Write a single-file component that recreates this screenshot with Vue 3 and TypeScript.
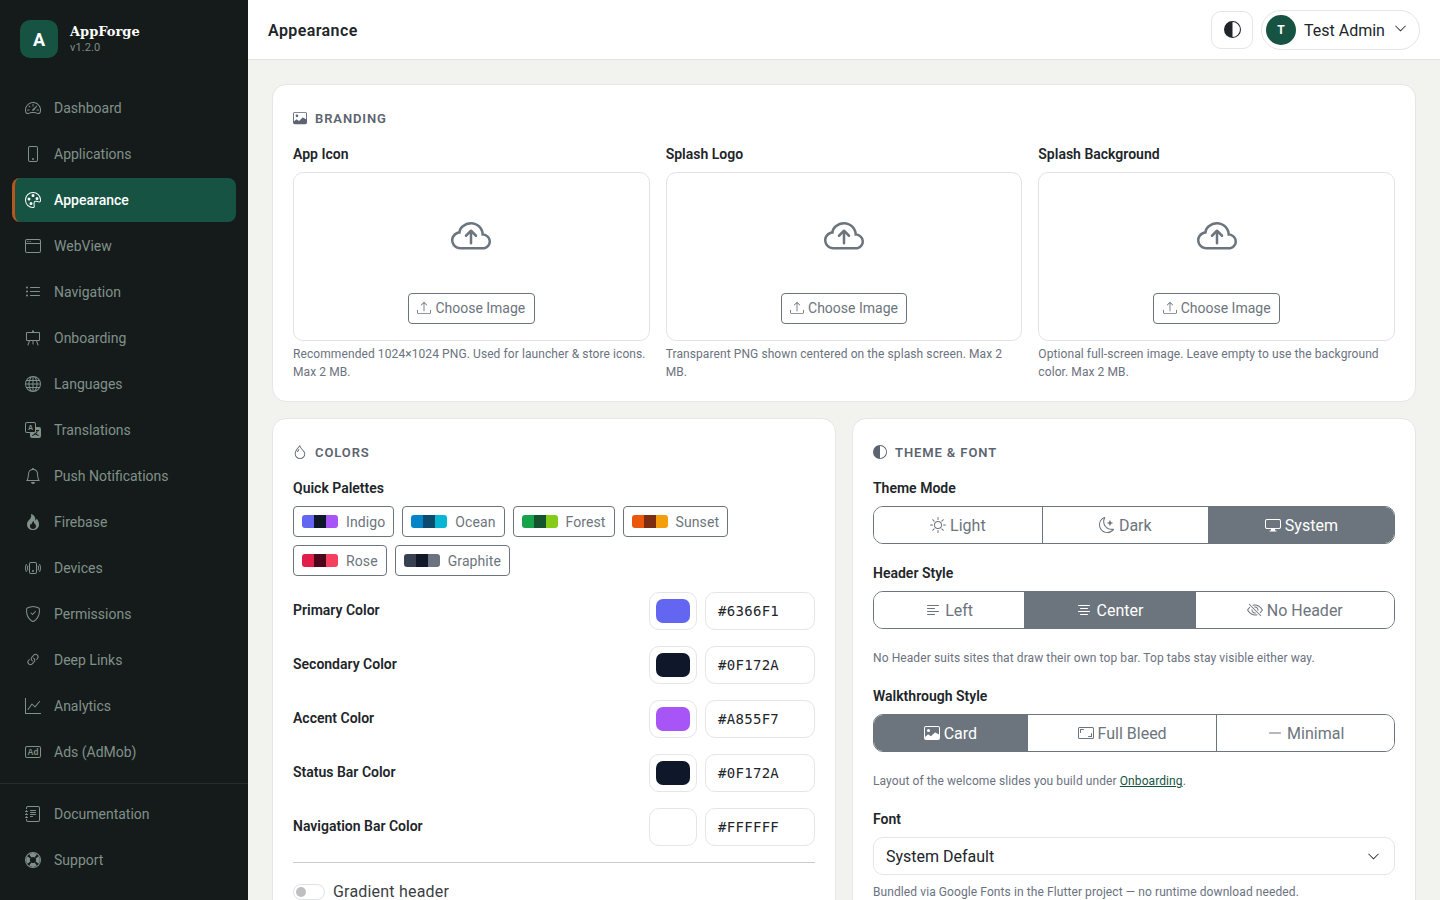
<script setup lang="ts">
import { h } from 'vue';
import type { FunctionalComponent } from 'vue';

const icons: Record<string, string[]> = {
  speedometer: ['M8 4a.5.5 0 0 1 .5.5V6a.5.5 0 0 1-1 0V4.5A.5.5 0 0 1 8 4M3.732 5.732a.5.5 0 0 1 .707 0l.915.914a.5.5 0 1 1-.708.708l-.914-.915a.5.5 0 0 1 0-.707M2 10a.5.5 0 0 1 .5-.5h1.586a.5.5 0 0 1 0 1H2.5A.5.5 0 0 1 2 10m9.5 0a.5.5 0 0 1 .5-.5h1.5a.5.5 0 0 1 0 1H12a.5.5 0 0 1-.5-.5m.754-4.246a.39.39 0 0 0-.527-.02L7.547 9.31a.91.91 0 1 0 1.302 1.258l3.434-4.297a.39.39 0 0 0-.029-.518z', 'M0 10a8 8 0 1 1 15.547 2.661c-.442 1.253-1.845 1.602-2.932 1.25C11.309 13.488 9.475 13 8 13c-1.474 0-3.31.488-4.615.911-1.087.352-2.49.003-2.932-1.25A8 8 0 0 1 0 10m8-7a7 7 0 0 0-6.603 9.329c.203.575.923.876 1.68.63C4.397 12.533 6.358 12 8 12s3.604.532 4.923.96c.757.245 1.477-.056 1.68-.631A7 7 0 0 0 8 3'],
  phone: ['M11 1a1 1 0 0 1 1 1v12a1 1 0 0 1-1 1H5a1 1 0 0 1-1-1V2a1 1 0 0 1 1-1zM5 0a2 2 0 0 0-2 2v12a2 2 0 0 0 2 2h6a2 2 0 0 0 2-2V2a2 2 0 0 0-2-2z', 'M8 14a1 1 0 1 0 0-2 1 1 0 0 0 0 2'],
  palette: ['M8 5a1.5 1.5 0 1 0 0-3 1.5 1.5 0 0 0 0 3m4 3a1.5 1.5 0 1 0 0-3 1.5 1.5 0 0 0 0 3M5.5 7a1.5 1.5 0 1 1-3 0 1.5 1.5 0 0 1 3 0m.5 6a1.5 1.5 0 1 0 0-3 1.5 1.5 0 0 0 0 3', 'M16 8c0 3.15-1.866 2.585-3.567 2.07C11.42 9.763 10.465 9.473 10 10c-.603.683-.475 1.819-.351 2.92C9.826 14.495 9.996 16 8 16a8 8 0 1 1 8-8m-8 7c.611 0 .654-.171.655-.176.078-.146.124-.464.07-1.119-.014-.168-.037-.37-.061-.591-.052-.464-.112-1.005-.118-1.462-.01-.707.083-1.61.704-2.314.369-.417.845-.578 1.272-.618.404-.038.812.026 1.16.104.343.077.702.186 1.025.284l.028.008c.346.105.658.199.953.266.653.148.904.083.991.024C14.717 9.38 15 9.161 15 8a7 7 0 1 0-7 7'],
  window: ['M2.5 4a.5.5 0 1 0 0-1 .5.5 0 0 0 0 1m2-.5a.5.5 0 1 1-1 0 .5.5 0 0 1 1 0m1 .5a.5.5 0 1 0 0-1 .5.5 0 0 0 0 1', 'M2 1a2 2 0 0 0-2 2v10a2 2 0 0 0 2 2h12a2 2 0 0 0 2-2V3a2 2 0 0 0-2-2zm13 2v2H1V3a1 1 0 0 1 1-1h12a1 1 0 0 1 1 1M2 14a1 1 0 0 1-1-1V6h14v7a1 1 0 0 1-1 1z'],
  list: ['M5 11.5a.5.5 0 0 1 .5-.5h9a.5.5 0 0 1 0 1h-9a.5.5 0 0 1-.5-.5m0-4a.5.5 0 0 1 .5-.5h9a.5.5 0 0 1 0 1h-9a.5.5 0 0 1-.5-.5m0-4a.5.5 0 0 1 .5-.5h9a.5.5 0 0 1 0 1h-9a.5.5 0 0 1-.5-.5m-3 1a1 1 0 1 0 0-2 1 1 0 0 0 0 2m0 4a1 1 0 1 0 0-2 1 1 0 0 0 0 2m0 4a1 1 0 1 0 0-2 1 1 0 0 0 0 2'],
  easel: ['M8 0a.5.5 0 0 1 .473.337L9.046 2H14a1 1 0 0 1 1 1v7a1 1 0 0 1-1 1h-1.85l1.323 3.837a.5.5 0 1 1-.946.326L11.092 11H8.5v3a.5.5 0 0 1-1 0v-3H4.908l-1.435 4.163a.5.5 0 1 1-.946-.326L3.85 11H2a1 1 0 0 1-1-1V3a1 1 0 0 1 1-1h4.954L7.527.337A.5.5 0 0 1 8 0M2 3v7h12V3z'],
  globe: ['M0 8a8 8 0 1 1 16 0A8 8 0 0 1 0 8m7.5-6.923c-.67.204-1.335.82-1.887 1.855A8 8 0 0 0 5.145 4H7.5zM4.09 4a9.3 9.3 0 0 1 .64-1.539 7 7 0 0 1 .597-.933A7.03 7.03 0 0 0 2.255 4zm-.582 3.5c.03-.877.138-1.718.312-2.5H1.674a7 7 0 0 0-.656 2.5zM4.847 5a12.5 12.5 0 0 0-.338 2.5H7.5V5zM8.5 5v2.5h2.99a12.5 12.5 0 0 0-.337-2.5zM4.51 8.5a12.5 12.5 0 0 0 .337 2.5H7.5V8.5zm3.99 0V11h2.653c.187-.765.306-1.608.338-2.5zM5.145 12q.208.58.468 1.068c.552 1.035 1.218 1.65 1.887 1.855V12zm.182 2.472a7 7 0 0 1-.597-.933A9.3 9.3 0 0 1 4.09 12H2.255a7 7 0 0 0 3.072 2.472M3.82 11a13.7 13.7 0 0 1-.312-2.5h-2.49c.062.89.291 1.733.656 2.5zm6.853 3.472A7 7 0 0 0 13.745 12H11.91a9.3 9.3 0 0 1-.64 1.539 7 7 0 0 1-.597.933M8.5 12v2.923c.67-.204 1.335-.82 1.887-1.855q.26-.487.468-1.068zm3.68-1h2.146c.365-.767.594-1.61.656-2.5h-2.49a13.7 13.7 0 0 1-.312 2.5m2.802-3.5a7 7 0 0 0-.656-2.5H12.18c.174.782.282 1.623.312 2.5zM11.27 2.461c.247.464.462.98.64 1.539h1.835a7 7 0 0 0-3.072-2.472c.218.284.418.598.597.933M10.855 4a8 8 0 0 0-.468-1.068C9.835 1.897 9.17 1.282 8.5 1.077V4z'],
  translate: ['M0 2a2 2 0 0 1 2-2h7a2 2 0 0 1 2 2v3h3a2 2 0 0 1 2 2v7a2 2 0 0 1-2 2H7a2 2 0 0 1-2-2v-3H2a2 2 0 0 1-2-2zm2-1a1 1 0 0 0-1 1v7a1 1 0 0 0 1 1h7a1 1 0 0 0 1-1V2a1 1 0 0 0-1-1zm7.138 9.995q.289.451.63.846c-.748.575-1.673 1.001-2.768 1.292.178.217.451.635.555.867 1.125-.359 2.08-.844 2.886-1.494.777.665 1.739 1.165 2.93 1.472.133-.254.414-.673.629-.89-1.125-.253-2.057-.694-2.82-1.284.681-.747 1.222-1.651 1.621-2.757H14V8h-3v1.047h.765c-.318.844-.74 1.546-1.272 2.13a6 6 0 0 1-.415-.492 2 2 0 0 1-.94.31'],
  bell: ['M8 16a2 2 0 0 0 2-2H6a2 2 0 0 0 2 2M8 1.918l-.797.161A4 4 0 0 0 4 6c0 .628-.134 2.197-.459 3.742-.16.767-.376 1.566-.663 2.258h10.244c-.287-.692-.502-1.49-.663-2.258C12.134 8.197 12 6.628 12 6a4 4 0 0 0-3.203-3.92zM14.22 12c.223.447.481.801.78 1H1c.299-.199.557-.553.78-1C2.68 10.2 3 6.88 3 6c0-2.42 1.72-4.44 4.005-4.901a1 1 0 1 1 1.99 0A5 5 0 0 1 13 6c0 .88.32 4.2 1.22 6'],
  fire: ['M8 16c3.314 0 6-2 6-5.5 0-1.5-.5-4-2.5-6 .25 1.5-1.25 2-1.25 2C11 4 9 .5 6 0c.357 2 .5 4-2 6-1.25 1-2 2.729-2 4.5C2 14 4.686 16 8 16m0-1c-1.657 0-3-1-3-2.75 0-.75.25-2 1.25-3C6.125 10 7 10.5 7 10.5c-.375-1.25.5-3.25 2-3.5-.179 1-.25 2 1 3 .625.5 1 1.364 1 2.25C11 14 9.657 15 8 15'],
  vibrate: ['M10 3a1 1 0 0 1 1 1v8a1 1 0 0 1-1 1H6a1 1 0 0 1-1-1V4a1 1 0 0 1 1-1zM6 2a2 2 0 0 0-2 2v8a2 2 0 0 0 2 2h4a2 2 0 0 0 2-2V4a2 2 0 0 0-2-2z', 'M8 12a1 1 0 1 0 0-2 1 1 0 0 0 0 2M1.599 4.058a.5.5 0 0 1 .208.676A7 7 0 0 0 1 8c0 1.18.292 2.292.807 3.266a.5.5 0 0 1-.884.468A8 8 0 0 1 0 8c0-1.347.334-2.619.923-3.734a.5.5 0 0 1 .676-.208m12.802 0a.5.5 0 0 1 .676.208A8 8 0 0 1 16 8a8 8 0 0 1-.923 3.734.5.5 0 0 1-.884-.468A7 7 0 0 0 15 8c0-1.18-.292-2.292-.807-3.266a.5.5 0 0 1 .208-.676M3.057 5.534a.5.5 0 0 1 .284.648A5 5 0 0 0 3 8c0 .642.12 1.255.34 1.818a.5.5 0 1 1-.93.364A6 6 0 0 1 2 8c0-.769.145-1.505.41-2.182a.5.5 0 0 1 .647-.284m9.886 0a.5.5 0 0 1 .648.284C13.855 6.495 14 7.231 14 8s-.145 1.505-.41 2.182a.5.5 0 0 1-.93-.364C12.88 9.255 13 8.642 13 8s-.12-1.255-.34-1.818a.5.5 0 0 1 .283-.648'],
  shield: ['M5.338 1.59a61 61 0 0 0-2.837.856.48.48 0 0 0-.328.39c-.554 4.157.726 7.19 2.253 9.188a10.7 10.7 0 0 0 2.287 2.233c.346.244.652.42.893.533q.18.085.293.118a1 1 0 0 0 .101.025 1 1 0 0 0 .1-.025q.114-.034.294-.118c.24-.113.547-.29.893-.533a10.7 10.7 0 0 0 2.287-2.233c1.527-1.997 2.807-5.031 2.253-9.188a.48.48 0 0 0-.328-.39c-.651-.213-1.75-.56-2.837-.855C9.552 1.29 8.531 1.067 8 1.067c-.53 0-1.552.223-2.662.524zM5.072.56C6.157.265 7.31 0 8 0s1.843.265 2.928.56c1.11.3 2.229.655 2.887.87a1.54 1.54 0 0 1 1.044 1.262c.596 4.477-.787 7.795-2.465 9.99a11.8 11.8 0 0 1-2.517 2.453 7 7 0 0 1-1.048.625c-.28.132-.581.24-.829.24s-.548-.108-.829-.24a7 7 0 0 1-1.048-.625 11.8 11.8 0 0 1-2.517-2.453C1.928 10.487.545 7.169 1.141 2.692A1.54 1.54 0 0 1 2.185 1.43 63 63 0 0 1 5.072.56', 'M10.854 5.146a.5.5 0 0 1 0 .708l-3 3a.5.5 0 0 1-.708 0l-1.5-1.5a.5.5 0 1 1 .708-.708L7.5 7.793l2.646-2.647a.5.5 0 0 1 .708 0'],
  link: ['M4.715 6.542 3.343 7.914a3 3 0 1 0 4.243 4.243l1.828-1.829A3 3 0 0 0 8.586 5.5L8 6.086a1 1 0 0 0-.154.199 2 2 0 0 1 .861 3.337L6.88 11.45a2 2 0 1 1-2.83-2.83l.793-.792a4 4 0 0 1-.128-1.287z', 'M6.586 4.672A3 3 0 0 0 7.414 9.5l.775-.776a2 2 0 0 1-.896-3.346L9.12 3.55a2 2 0 1 1 2.83 2.83l-.793.792c.112.42.155.855.128 1.287l1.372-1.372a3 3 0 1 0-4.243-4.243z'],
  graph: ['M0 0h1v15h15v1H0zm14.817 3.113a.5.5 0 0 1 .07.704l-4.5 5.5a.5.5 0 0 1-.74.037L7.06 6.767l-3.656 5.027a.5.5 0 0 1-.808-.588l4-5.5a.5.5 0 0 1 .758-.06l2.609 2.61 4.15-5.073a.5.5 0 0 1 .704-.07'],
  badge: ['M14 3a1 1 0 0 1 1 1v8a1 1 0 0 1-1 1H2a1 1 0 0 1-1-1V4a1 1 0 0 1 1-1zM2 2a2 2 0 0 0-2 2v8a2 2 0 0 0 2 2h12a2 2 0 0 0 2-2V4a2 2 0 0 0-2-2z'],
  journal: ['M5 10.5a.5.5 0 0 1 .5-.5h2a.5.5 0 0 1 0 1h-2a.5.5 0 0 1-.5-.5m0-2a.5.5 0 0 1 .5-.5h5a.5.5 0 0 1 0 1h-5a.5.5 0 0 1-.5-.5m0-2a.5.5 0 0 1 .5-.5h5a.5.5 0 0 1 0 1h-5a.5.5 0 0 1-.5-.5m0-2a.5.5 0 0 1 .5-.5h5a.5.5 0 0 1 0 1h-5a.5.5 0 0 1-.5-.5', 'M3 0h10a2 2 0 0 1 2 2v12a2 2 0 0 1-2 2H3a2 2 0 0 1-2-2v-1h1v1a1 1 0 0 0 1 1h10a1 1 0 0 0 1-1V2a1 1 0 0 0-1-1H3a1 1 0 0 0-1 1v1H1V2a2 2 0 0 1 2-2', 'M1 5v-.5a.5.5 0 0 1 1 0V5h.5a.5.5 0 0 1 0 1h-2a.5.5 0 0 1 0-1zm0 3v-.5a.5.5 0 0 1 1 0V8h.5a.5.5 0 0 1 0 1h-2a.5.5 0 0 1 0-1zm0 3v-.5a.5.5 0 0 1 1 0v.5h.5a.5.5 0 0 1 0 1h-2a.5.5 0 0 1 0-1z'],
  lifebuoy: ['M8 0a8 8 0 1 1 0 16A8 8 0 0 1 8 0m0 1a7 7 0 1 0 0 14A7 7 0 0 0 8 1', 'M4.2 2.4A6.8 6.8 0 0 1 11.8 2.4L9.6 5.4a3 3 0 0 0-3.2 0zM13.6 4.2a6.8 6.8 0 0 1 0 7.6l-3-2.2a3 3 0 0 0 0-3.2zM11.8 13.6a6.8 6.8 0 0 1-7.6 0l2.2-3a3 3 0 0 0 3.2 0zM2.4 11.8a6.8 6.8 0 0 1 0-7.6l3 2.2a3 3 0 0 0 0 3.2z'],
  image: ['M6.002 5.5a1.5 1.5 0 1 1-3 0 1.5 1.5 0 0 1 3 0', 'M2.002 1a2 2 0 0 0-2 2v10a2 2 0 0 0 2 2h12a2 2 0 0 0 2-2V3a2 2 0 0 0-2-2zm12 1a1 1 0 0 1 1 1v6.5l-3.777-1.947a.5.5 0 0 0-.577.093l-3.71 3.71-2.66-1.772a.5.5 0 0 0-.63.062L1.002 12V3a1 1 0 0 1 1-1z'],
  droplet: ['M7.21.8C7.69.295 8 0 8 0q.164.544.371 1.038c.812 1.946 2.073 3.35 3.197 4.6C12.878 7.096 14 8.345 14 10a6 6 0 0 1-12 0C2 6.668 5.58 2.517 7.21.8m.413 1.021A31 31 0 0 0 5.794 3.99c-.726.95-1.436 2.008-1.96 3.07C3.304 8.133 3 9.138 3 10a5 5 0 0 0 10 0c0-1.201-.796-2.157-2.181-3.7l-.03-.032C9.75 5.11 8.5 3.72 7.623 1.82z', 'M4.553 7.776c.82-1.641 1.717-2.753 2.093-3.13l.708.708c-.29.29-1.128 1.311-1.907 2.87z'],
  half: ['M8 15A7 7 0 1 0 8 1zm0 1A8 8 0 1 1 8 0a8 8 0 0 1 0 16'],
  cloud: ['M7.646 5.146a.5.5 0 0 1 .708 0l2 2a.5.5 0 0 1-.708.708L8.5 6.707V10.5a.5.5 0 0 1-1 0V6.707L6.354 7.854a.5.5 0 1 1-.708-.708z', 'M4.406 3.342A5.53 5.53 0 0 1 8 2c2.69 0 4.923 2 5.166 4.579C14.758 6.804 16 8.137 16 9.773 16 11.569 14.502 13 12.687 13H3.781C1.708 13 0 11.366 0 9.318c0-1.763 1.266-3.223 2.942-3.593.143-.863.698-1.723 1.464-2.383m.653.757c-.757.653-1.153 1.44-1.153 2.056v.448l-.445.049C2.064 6.805 1 7.952 1 9.318 1 10.785 2.23 12 3.781 12h8.906C13.98 12 15 10.988 15 9.773c0-1.216-1.02-2.228-2.313-2.228h-.5v-.5C12.188 4.825 10.328 3 8 3a4.53 4.53 0 0 0-2.941 1.1z'],
  upload: ['M.5 9.9a.5.5 0 0 1 .5.5v2.5a1 1 0 0 0 1 1h12a1 1 0 0 0 1-1v-2.5a.5.5 0 0 1 1 0v2.5a2 2 0 0 1-2 2H2a2 2 0 0 1-2-2v-2.5a.5.5 0 0 1 .5-.5', 'M7.646 1.146a.5.5 0 0 1 .708 0l3 3a.5.5 0 0 1-.708.708L8.5 2.707V11.5a.5.5 0 0 1-1 0V2.707L5.354 4.854a.5.5 0 1 1-.708-.708z'],
  sun: ['M8 11a3 3 0 1 1 0-6 3 3 0 0 1 0 6m0 1a4 4 0 1 0 0-8 4 4 0 0 0 0 8M8 0a.5.5 0 0 1 .5.5v2a.5.5 0 0 1-1 0v-2A.5.5 0 0 1 8 0m0 13a.5.5 0 0 1 .5.5v2a.5.5 0 0 1-1 0v-2A.5.5 0 0 1 8 13m8-5a.5.5 0 0 1-.5.5h-2a.5.5 0 0 1 0-1h2a.5.5 0 0 1 .5.5M3 8a.5.5 0 0 1-.5.5h-2a.5.5 0 0 1 0-1h2A.5.5 0 0 1 3 8m10.657-5.657a.5.5 0 0 1 0 .707l-1.414 1.415a.5.5 0 1 1-.707-.708l1.414-1.414a.5.5 0 0 1 .707 0m-9.193 9.193a.5.5 0 0 1 0 .707L3.05 13.657a.5.5 0 0 1-.707-.707l1.414-1.414a.5.5 0 0 1 .707 0m9.193 2.121a.5.5 0 0 1-.707 0l-1.414-1.414a.5.5 0 0 1 .707-.707l1.414 1.414a.5.5 0 0 1 0 .707M4.464 4.465a.5.5 0 0 1-.707 0L2.343 3.05a.5.5 0 1 1 .707-.707l1.414 1.414a.5.5 0 0 1 0 .708'],
  moon: ['M6 .278a.77.77 0 0 1 .08.858 7.2 7.2 0 0 0-.878 3.46c0 4.021 3.278 7.277 7.318 7.277q.792-.001 1.533-.16a.79.79 0 0 1 .81.316.73.73 0 0 1-.031.893A8.35 8.35 0 0 1 8.344 16C3.734 16 0 12.286 0 7.71 0 4.266 2.114 1.312 5.124.06A.75.75 0 0 1 6 .278M4.858 1.311A7.27 7.27 0 0 0 1.025 7.71c0 4.02 3.279 7.276 7.319 7.276a7.32 7.32 0 0 0 5.205-2.162q-.506.063-1.029.063c-4.61 0-8.343-3.714-8.343-8.29 0-1.167.242-2.278.681-3.286', 'M10.794 3.148a.217.217 0 0 1 .412 0l.387 1.162c.173.518.579.924 1.097 1.097l1.162.387a.217.217 0 0 1 0 .412l-1.162.387a1.73 1.73 0 0 0-1.097 1.097l-.387 1.162a.217.217 0 0 1-.412 0l-.387-1.162A1.73 1.73 0 0 0 9.31 6.593l-1.162-.387a.217.217 0 0 1 0-.412l1.162-.387a1.73 1.73 0 0 0 1.097-1.097z'],
  display: ['M0 4s0-2 2-2h12s2 0 2 2v6s0 2-2 2h-4q0 1 .25 1.5H11a.5.5 0 0 1 0 1H5a.5.5 0 0 1 0-1h.75Q6 13 6 12H2s-2 0-2-2zm1.398-.855a.76.76 0 0 0-.254.302A1.5 1.5 0 0 0 1 4.01V10c0 .325.078.502.145.602q.105.156.302.254a1.5 1.5 0 0 0 .538.143L2.01 11H14c.325 0 .502-.078.602-.145a.76.76 0 0 0 .254-.302 1.5 1.5 0 0 0 .143-.538L15 9.99V4c0-.325-.078-.502-.145-.602a.76.76 0 0 0-.302-.254A1.5 1.5 0 0 0 13.99 3H2c-.325 0-.502.078-.602.145'],
  textLeft: ['M2 12.5a.5.5 0 0 1 .5-.5h7a.5.5 0 0 1 0 1h-7a.5.5 0 0 1-.5-.5m0-3a.5.5 0 0 1 .5-.5h11a.5.5 0 0 1 0 1h-11a.5.5 0 0 1-.5-.5m0-3a.5.5 0 0 1 .5-.5h7a.5.5 0 0 1 0 1h-7a.5.5 0 0 1-.5-.5m0-3a.5.5 0 0 1 .5-.5h11a.5.5 0 0 1 0 1h-11a.5.5 0 0 1-.5-.5'],
  textCenter: ['M4 12.5a.5.5 0 0 1 .5-.5h7a.5.5 0 0 1 0 1h-7a.5.5 0 0 1-.5-.5m-2-3a.5.5 0 0 1 .5-.5h11a.5.5 0 0 1 0 1h-11a.5.5 0 0 1-.5-.5m2-3a.5.5 0 0 1 .5-.5h7a.5.5 0 0 1 0 1h-7a.5.5 0 0 1-.5-.5m-2-3a.5.5 0 0 1 .5-.5h11a.5.5 0 0 1 0 1h-11a.5.5 0 0 1-.5-.5'],
  eyeSlash: ['M13.359 11.238C15.06 9.72 16 8 16 8s-3-5.5-8-5.5a7 7 0 0 0-2.79.588l.77.771A6 6 0 0 1 8 3.5c2.12 0 3.879 1.168 5.168 2.457A13 13 0 0 1 14.828 8q-.086.13-.195.288c-.335.48-.83 1.12-1.465 1.755q-.247.248-.517.486z', 'M11.297 9.176a3.5 3.5 0 0 0-4.474-4.474l.823.823a2.5 2.5 0 0 1 2.829 2.829zm-2.943 1.299.822.822a3.5 3.5 0 0 1-4.474-4.474l.823.823a2.5 2.5 0 0 0 2.829 2.829', 'M3.35 5.47q-.27.24-.518.487A13 13 0 0 0 1.172 8l.195.288c.335.48.83 1.12 1.465 1.755C4.121 11.332 5.881 12.5 8 12.5c.716 0 1.39-.133 2.02-.36l.77.772A7 7 0 0 1 8 13.5C3 13.5 0 8 0 8s.939-1.721 2.641-3.238l.708.709zm10.296 8.884-12-12 .708-.708 12 12z'],
  aspect: ['M0 3.5A1.5 1.5 0 0 1 1.5 2h13A1.5 1.5 0 0 1 16 3.5v9a1.5 1.5 0 0 1-1.5 1.5h-13A1.5 1.5 0 0 1 0 12.5zM1.5 3a.5.5 0 0 0-.5.5v9a.5.5 0 0 0 .5.5h13a.5.5 0 0 0 .5-.5v-9a.5.5 0 0 0-.5-.5z', 'M2 4.5a.5.5 0 0 1 .5-.5h3a.5.5 0 0 1 0 1H3v2.5a.5.5 0 0 1-1 0zm12 7a.5.5 0 0 1-.5.5h-3a.5.5 0 0 1 0-1H13V8.5a.5.5 0 0 1 1 0z'],
  dash: ['M2 8a.5.5 0 0 1 .5-.5h11a.5.5 0 0 1 0 1h-11A.5.5 0 0 1 2 8'],
  chevron: ['M1.646 4.646a.5.5 0 0 1 .708 0L8 10.293l5.646-5.647a.5.5 0 0 1 .708.708l-6 6a.5.5 0 0 1-.708 0l-6-6a.5.5 0 0 1 0-.708'],
};

// the two icons holding letters keep them as real text
const iconText: Record<string, { x: number; y: number; size: number; text: string }> = {
  translate: { x: 5.5, y: 7.9, size: 7, text: 'A' },
  badge: { x: 8, y: 11, size: 8.2, text: 'Ad' },
};

const BiIcon: FunctionalComponent<{ name: string }> = (props) => {
  const label = iconText[props.name];
  const kids = icons[props.name].map((d) => h('path', { d }));
  if (label) {
    kids.push(h('text', {
      x: label.x,
      y: label.y,
      'font-size': label.size,
      'font-weight': 700,
      'font-family': '"Liberation Sans", sans-serif',
      'text-anchor': 'middle',
    }, label.text) as never);
  }
  return h('svg', { class: 'bi', viewBox: '0 0 16 16', fill: 'currentColor', 'aria-hidden': 'true' }, kids);
};

const mainNav = [
  { label: 'Dashboard', icon: 'speedometer' },
  { label: 'Applications', icon: 'phone' },
  { label: 'Appearance', icon: 'palette', active: true },
  { label: 'WebView', icon: 'window' },
  { label: 'Navigation', icon: 'list' },
  { label: 'Onboarding', icon: 'easel' },
  { label: 'Languages', icon: 'globe' },
  { label: 'Translations', icon: 'translate' },
  { label: 'Push Notifications', icon: 'bell' },
  { label: 'Firebase', icon: 'fire' },
  { label: 'Devices', icon: 'vibrate' },
  { label: 'Permissions', icon: 'shield' },
  { label: 'Deep Links', icon: 'link' },
  { label: 'Analytics', icon: 'graph' },
  { label: 'Ads (AdMob)', icon: 'badge' },
];

const footerNav = [
  { label: 'Documentation', icon: 'journal' },
  { label: 'Support', icon: 'lifebuoy' },
];

const uploads = [
  { label: 'App Icon', hint: 'Recommended 1024×1024 PNG. Used for launcher & store icons. Max 2 MB.' },
  { label: 'Splash Logo', hint: 'Transparent PNG shown centered on the splash screen. Max 2 MB.' },
  { label: 'Splash Background', hint: 'Optional full-screen image. Leave empty to use the background color. Max 2 MB.' },
];

const palettes = [
  { name: 'Indigo', colors: ['#6366f1', '#0f172a', '#a855f7'] },
  { name: 'Ocean', colors: ['#0284c7', '#0c4a6e', '#06b6d4'] },
  { name: 'Forest', colors: ['#16a34a', '#14532d', '#84cc16'] },
  { name: 'Sunset', colors: ['#ea580c', '#7c2d12', '#f59e0b'] },
  { name: 'Rose', colors: ['#e11d48', '#4c0519', '#f43f5e'] },
  { name: 'Graphite', colors: ['#374151', '#111827', '#6b7280'] },
];

const colorRows = [
  { label: 'Primary Color', value: '#6366F1' },
  { label: 'Secondary Color', value: '#0F172A' },
  { label: 'Accent Color', value: '#A855F7' },
  { label: 'Status Bar Color', value: '#0F172A' },
  { label: 'Navigation Bar Color', value: '#FFFFFF' },
];

const themeModes = [
  { label: 'Light', icon: 'sun' },
  { label: 'Dark', icon: 'moon' },
  { label: 'System', icon: 'display', active: true },
];

const headerStyles = [
  { label: 'Left', icon: 'textLeft' },
  { label: 'Center', icon: 'textCenter', active: true },
  { label: 'No Header', icon: 'eyeSlash' },
];

const walkthroughStyles = [
  { label: 'Card', icon: 'image', active: true },
  { label: 'Full Bleed', icon: 'aspect' },
  { label: 'Minimal', icon: 'dash' },
];
</script>

<template>
  <div class="layout">
    <aside class="sidebar">
      <div class="brand">
        <div class="brand-logo">A</div>
        <div class="brand-text">
          <div class="brand-name">AppForge</div>
          <div class="brand-version">v1.2.0</div>
        </div>
      </div>
      <nav class="nav">
        <a v-for="item in mainNav" :key="item.label" class="nav-item" :class="{ active: item.active }">
          <BiIcon :name="item.icon" />
          <span>{{ item.label }}</span>
        </a>
      </nav>
      <nav class="nav nav-footer">
        <a v-for="item in footerNav" :key="item.label" class="nav-item">
          <BiIcon :name="item.icon" />
          <span>{{ item.label }}</span>
        </a>
      </nav>
    </aside>

    <div class="main">
      <header class="topbar">
        <h1 class="page-title">Appearance</h1>
        <div class="topbar-right">
          <button class="theme-btn"><BiIcon name="half" /></button>
          <div class="user-pill">
            <span class="avatar">T</span>
            <span class="user-name">Test Admin</span>
            <BiIcon name="chevron" class="user-chevron" />
          </div>
        </div>
      </header>

      <main class="content">
        <section class="card">
          <h2 class="card-title"><BiIcon name="image" />Branding</h2>
          <div class="upload-grid">
            <div v-for="up in uploads" :key="up.label">
              <div class="field-label">{{ up.label }}</div>
              <div class="dropzone">
                <BiIcon name="cloud" class="cloud" />
                <button class="choose-btn"><BiIcon name="upload" />Choose Image</button>
              </div>
              <p class="hint upload-hint">{{ up.hint }}</p>
            </div>
          </div>
        </section>

        <div class="two-col">
          <section class="card">
            <h2 class="card-title"><BiIcon name="droplet" />Colors</h2>
            <div class="field-label">Quick Palettes</div>
            <div class="palettes">
              <button v-for="p in palettes" :key="p.name" class="palette-btn">
                <span class="palette-bar">
                  <i v-for="c in p.colors" :key="c" :style="{ background: c }"></i>
                </span>
                {{ p.name }}
              </button>
            </div>
            <div v-for="row in colorRows" :key="row.label" class="color-row">
              <span class="color-label">{{ row.label }}</span>
              <span class="swatch"><i :style="{ background: row.value }"></i></span>
              <span class="hex">{{ row.value }}</span>
            </div>
            <hr class="divider" />
            <div class="switch-row">
              <span class="switch"></span>
              <span>Gradient header</span>
            </div>
          </section>

          <section class="card">
            <h2 class="card-title"><BiIcon name="half" />Theme &amp; Font</h2>

            <div class="field-label">Theme Mode</div>
            <div class="btn-group">
              <button v-for="o in themeModes" :key="o.label" :class="{ active: o.active }">
                <BiIcon :name="o.icon" />{{ o.label }}
              </button>
            </div>

            <div class="field-label next">Header Style</div>
            <div class="btn-group">
              <button v-for="o in headerStyles" :key="o.label" :class="{ active: o.active }">
                <BiIcon :name="o.icon" />{{ o.label }}
              </button>
            </div>
            <p class="hint group-hint">No Header suits sites that draw their own top bar. Top tabs stay visible either way.</p>

            <div class="field-label next">Walkthrough Style</div>
            <div class="btn-group">
              <button v-for="o in walkthroughStyles" :key="o.label" :class="{ active: o.active }">
                <BiIcon :name="o.icon" />{{ o.label }}
              </button>
            </div>
            <p class="hint group-hint">Layout of the welcome slides you build under <a class="hint-link">Onboarding</a>.</p>

            <div class="field-label next">Font</div>
            <div class="select">
              <span>System Default</span>
              <BiIcon name="chevron" />
            </div>
            <p class="hint font-hint">Bundled via Google Fonts in the Flutter project — no runtime download needed.</p>
          </section>
        </div>
      </main>
    </div>
  </div>
</template>

<style>
html,
body {
  margin: 0;
  height: 100%;
  overflow: hidden;
}
</style>

<style scoped>
.layout {
  display: flex;
  height: 100vh;
  font-family: Roboto, "Noto Sans", sans-serif;
  color: #212529;
  background: #f2f2ee;
}
.bi {
  width: 1em;
  height: 1em;
  flex-shrink: 0;
  display: inline-block;
}

/* sidebar */
.sidebar {
  width: 248px;
  flex-shrink: 0;
  background: #151b1a;
  color: #80918a;
  overflow: hidden;
}
.brand {
  display: flex;
  align-items: center;
  gap: 12px;
  padding: 20px 20px 16px;
}
.brand-logo {
  width: 38px;
  height: 38px;
  border-radius: 10px;
  background: #165343;
  color: #fff;
  font-weight: 700;
  font-size: 18px;
  display: flex;
  align-items: center;
  justify-content: center;
}
.brand-text {
  margin-top: -1px;
}
.brand-name {
  font-family: "DejaVu Serif", "Liberation Serif", serif;
  font-weight: 700;
  font-size: 13px;
  line-height: 18px;
  color: #fff;
}
.brand-version {
  font-size: 11px;
  line-height: 13px;
  letter-spacing: 0.1px;
  color: #7f8c87;
}
.nav {
  padding: 12px 12px 9px;
  display: flex;
  flex-direction: column;
  gap: 2px;
}
.nav-item {
  height: 44px;
  box-sizing: border-box;
  display: flex;
  align-items: center;
  gap: 13px;
  padding: 0 13px;
  font-size: 14px;
  border-radius: 8px;
}
.nav-item .bi {
  font-size: 16px;
}
.nav-item.active {
  background: #165343;
  color: #fff;
  font-weight: 500;
  border-left: 3px solid #b5561f;
  padding-left: 10px;
}
.nav-footer {
  padding-top: 8px;
  border-top: 1px solid #262d2c;
}

/* top bar */
.main {
  flex: 1;
  min-width: 0;
  display: flex;
  flex-direction: column;
}
.topbar {
  height: 60px;
  box-sizing: border-box;
  flex-shrink: 0;
  background: #fff;
  border-bottom: 1px solid #e3e4e4;
  display: flex;
  align-items: center;
  justify-content: space-between;
  padding: 0 20px;
}
.page-title {
  margin: 1px 0 0;
  font-size: 16px;
  font-weight: 600;
  letter-spacing: 0.4px;
  color: #212529;
}
.topbar-right {
  display: flex;
  align-items: center;
  gap: 8px;
}
.theme-btn {
  width: 42px;
  height: 38px;
  background: #fff;
  border: 1px solid #e3e5e8;
  border-radius: 10px;
  font-size: 17px;
  color: #212529;
  display: flex;
  align-items: center;
  justify-content: center;
  padding: 0;
}
.user-pill {
  height: 40px;
  box-sizing: border-box;
  width: 159px;
  border: 1px solid #e3e5e8;
  border-radius: 20px;
  display: flex;
  align-items: center;
  padding: 0 12px 0 4px;
}
.avatar {
  width: 30px;
  height: 30px;
  border-radius: 50%;
  background: #165343;
  color: #fff;
  font-size: 12px;
  font-weight: 700;
  display: flex;
  align-items: center;
  justify-content: center;
}
.user-name {
  font-size: 16px;
  margin: 1px 0 0 8px;
  flex: 1;
}
.user-chevron {
  font-size: 13px;
  margin-bottom: 2px;
}

/* content */
.content {
  flex: 1;
  overflow-y: auto;
  scrollbar-width: none;
  padding: 24px;
  display: flex;
  flex-direction: column;
  gap: 16px;
}
.card {
  background: #fff;
  border: 1px solid #e5e6e8;
  border-radius: 14px;
  padding: 20px;
  min-width: 0;
}
.card-title {
  margin: 0 0 13px;
  height: 26px;
  display: flex;
  align-items: center;
  gap: 8px;
  font-size: 13px;
  font-weight: 600;
  letter-spacing: 0.9px;
  text-transform: uppercase;
  color: #5b6470;
}
.card-title .bi {
  font-size: 14px;
}
.field-label {
  font-size: 14px;
  font-weight: 600;
  line-height: 21px;
  margin-bottom: 7px;
}
.field-label.next {
  margin-top: 19px;
}
.hint {
  margin: 0;
  font-size: 12px;
  line-height: 18px;
  letter-spacing: 0.09px;
  color: #6b7280;
}
.upload-grid {
  display: grid;
  grid-template-columns: repeat(3, 1fr);
  gap: 16px;
}
.dropzone {
  height: 169px;
  box-sizing: border-box;
  border: 1px solid #e1e3e8;
  border-radius: 10px;
  display: flex;
  flex-direction: column;
  align-items: center;
  color: #6c757d;
}
.cloud {
  font-size: 40px;
  margin-top: 44px;
}
.choose-btn {
  margin-top: 36px;
  height: 31px;
  padding: 0 8.5px 1px;
  display: inline-flex;
  align-items: center;
  gap: 4px;
  font: inherit;
  font-size: 14px;
  color: #6c757d;
  background: #fff;
  border: 1px solid #6c757d;
  border-radius: 4px;
}
.upload-hint {
  margin-top: 4px;
}
.two-col {
  display: grid;
  grid-template-columns: 1fr 1fr;
  gap: 16px;
}

/* colors */
.palettes {
  display: flex;
  flex-wrap: wrap;
  gap: 8px;
  margin-bottom: 16px;
}
.palette-btn {
  height: 31px;
  padding: 0 8px;
  display: inline-flex;
  align-items: center;
  gap: 8px;
  font: inherit;
  font-size: 14px;
  letter-spacing: 0.1px;
  color: #6c757d;
  background: #fff;
  border: 1px solid #6c757d;
  border-radius: 4px;
}
.palette-bar {
  display: flex;
  width: 36px;
  height: 13px;
  border-radius: 3px;
  overflow: hidden;
}
.palette-bar i {
  flex: 1;
}
.color-row {
  display: flex;
  align-items: center;
  gap: 8px;
  margin-bottom: 16px;
}
.color-label {
  flex: 1;
  font-size: 14px;
  font-weight: 600;
  margin-top: -3px;
}
.swatch {
  width: 48px;
  height: 38px;
  box-sizing: border-box;
  border: 1px solid #e3e5e8;
  border-radius: 10px;
  padding: 6px;
  display: flex;
}
.swatch i {
  flex: 1;
  border-radius: 7px;
}
.hex {
  width: 110px;
  height: 38px;
  box-sizing: border-box;
  border: 1px solid #e3e5e8;
  border-radius: 10px;
  padding: 0 12px;
  display: flex;
  align-items: center;
  font-family: "DejaVu Sans Mono", "Liberation Mono", monospace;
  font-size: 14px;
  letter-spacing: 0.3px;
}
.divider {
  margin: 0 0 19px;
  border: 0;
  border-top: 1px solid #c9cbcd;
}
.switch-row {
  display: flex;
  align-items: center;
  gap: 8px;
  font-size: 16px;
  letter-spacing: 0.2px;
  color: #3a3f44;
}
.switch {
  width: 32px;
  height: 16px;
  box-sizing: border-box;
  border: 1px solid #dee2e6;
  border-radius: 8px;
  position: relative;
}
.switch::after {
  content: "";
  position: absolute;
  left: 2px;
  top: 2px;
  width: 10px;
  height: 10px;
  border-radius: 50%;
  background: #bfbfbf;
}

/* segmented buttons */
.btn-group {
  display: flex;
  height: 38px;
  border: 1px solid #6c757d;
  border-radius: 10px;
  overflow: hidden;
  box-sizing: border-box;
}
.btn-group button {
  flex: 1 1 auto;
  display: flex;
  align-items: center;
  justify-content: center;
  gap: 4px;
  font: inherit;
  font-size: 16px;
  color: #6c757d;
  background: #fff;
  border: 0;
  border-left: 1px solid #6c757d;
  padding: 0 12px;
}
.btn-group button:first-child {
  border-left: 0;
}
.btn-group button.active {
  background: #6c757d;
  color: #fff;
}
.group-hint {
  margin-top: 20px;
}
.hint-link {
  color: #165343;
  text-decoration: underline;
}
.select {
  height: 38px;
  box-sizing: border-box;
  border: 1px solid #e3e5e8;
  border-radius: 10px;
  padding: 0 14px 0 12px;
  display: flex;
  align-items: center;
  justify-content: space-between;
  font-size: 16px;
}
.select .bi {
  font-size: 13px;
}
.font-hint {
  margin-top: 8px;
}
</style>
